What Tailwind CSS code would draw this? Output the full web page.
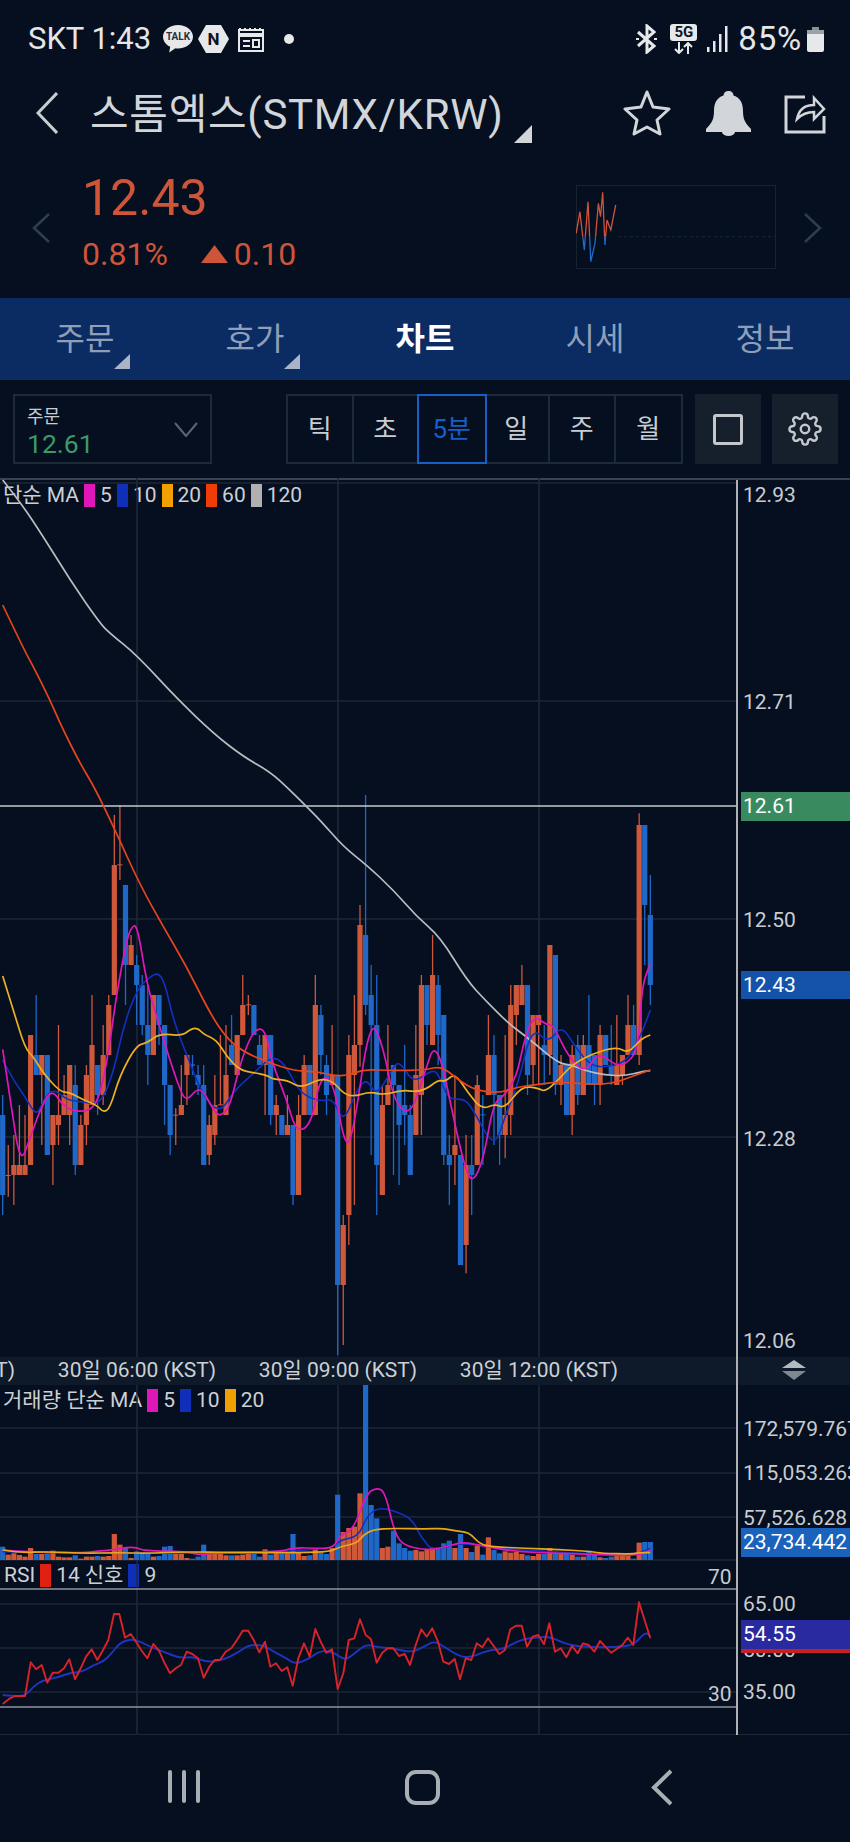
<!DOCTYPE html>
<html lang="ko">
<head>
  <meta charset="UTF-8">
  <meta name="viewport" content="width=device-width, initial-scale=1">
  <title>STMX/KRW</title>
  <script src="https://cdn.jsdelivr.net/npm/@tailwindcss/browser@4"></script>
</head>
<body class="w-[850px] h-[1842px] overflow-hidden bg-[#050f1f] text-[#ccd0d5] font-['Roboto','Noto_Sans_CJK_KR',sans-serif]">

  <!-- status bar -->
  <div class="h-[78px] flex items-center pl-[28px] pr-[26px] text-[#e4e6e8]">
    <span class="text-[31px]">SKT 1:43</span>
    <svg class="ml-[12px]" width="30" height="28" viewBox="0 0 30 28"><path d="M15 0C6.700 0 0 5.300 0 11.800c0 4.300 2.900 8 7.200 10l-1 5.700 6.200-4.200c.8.100 1.700.2 2.600.2 8.300 0 15-5.300 15-11.700S23.300 0 15 0z" fill="#e6e8ea"/><text x="15" y="15" text-anchor="middle" font-size="10" font-weight="700" fill="#26303c">TALK</text></svg>
    <svg class="ml-[5px]" width="31" height="28" viewBox="0 0 31 28"><polygon points="8,0 23,0 31,14 23,28 8,28 0,14" fill="#e6e8ea"/><text x="15.500" y="20" text-anchor="middle" font-size="17" font-weight="700" fill="#0c1522">N</text></svg>
    <svg class="ml-[9px]" width="26" height="25" viewBox="0 0 26 25" fill="none" stroke="#e6e8ea" stroke-width="2"><rect x="1" y="3" width="24" height="21"/><path d="M1 8h24" stroke-width="4"/><path d="M2 1v2M7 1v2M12 1v2M17 1v2M22 1v2M5 14h7M5 19h7M15 13h6v7h-6z"/></svg>
    <span class="ml-[20px] w-[10px] h-[10px] rounded-full bg-[#e6e8ea]"></span>
    <div class="ml-auto flex items-center">
      <svg width="21" height="30" viewBox="0 0 21 30" fill="none" stroke="#e6e8ea" stroke-width="3"><path d="M2 8l16 14-7 6V2l7 6L2 22"/><path d="M0 15h3M18 15h3" stroke-width="2"/></svg>
      <div class="ml-[13px] w-[27px] h-[30px] relative">
        <div class="w-[27px] h-[17px] rounded-[3px] bg-[#e6e8ea] text-[#0c1522] text-[15px] font-bold leading-[17px] text-center">5G</div>
        <svg class="absolute left-[3px] top-[18px]" width="21" height="12" viewBox="0 0 21 12" fill="none" stroke="#e6e8ea" stroke-width="2"><path d="M6 0v10M2 7l4 4 4-4M15 12V2M11 5l4-4 4 4"/></svg>
      </div>
      <svg class="ml-[10px]" width="22" height="26" viewBox="0 0 22 26" fill="#e6e8ea"><rect x="0" y="21" width="2.500" height="5"/><rect x="6" y="15" width="2.500" height="11"/><rect x="12" y="8" width="2.500" height="18"/><rect x="18" y="0" width="2.500" height="26"/></svg>
      <span class="ml-[9px] text-[33px] tracking-[0.8px]">85%</span>
      <svg class="ml-[5px]" width="17" height="25" viewBox="0 0 17 25"><rect x="0" y="3" width="17" height="22" rx="2" fill="#e6e8ea"/><rect x="5" y="0" width="7" height="3" fill="#8b9098"/><rect x="0" y="3" width="17" height="4" fill="#9ca1a7"/></svg>
    </div>
  </div>

  <!-- title -->
  <div class="h-[70px] flex items-center pl-[36px] pr-[24px] text-[#d2d6da]">
    <svg width="22" height="42" viewBox="0 0 22 42" fill="none" stroke="#c9cdd2" stroke-width="3"><path d="M21 1L2 21l19 20"/></svg>
    <span class="ml-[32px] mt-[3px] text-[42px] leading-none tracking-[0.7px]">스톰엑스(STMX/KRW)</span>
    <svg class="ml-[10px] self-end mb-[5px]" width="18" height="18" viewBox="0 0 18 18"><polygon points="18,0 18,18 0,18" fill="#d2d6da"/></svg>
    <svg class="ml-auto" width="48" height="46" viewBox="0 0 48 46" fill="none" stroke="#d2d6da" stroke-width="3" stroke-linejoin="round"><polygon points="24,2 30,17 46,19 34,30 37,44 24,37 11,44 14,30 2,19 18,17"/></svg>
    <svg class="ml-[34px]" width="47" height="45" viewBox="0 0 47 45" fill="#d2d6da"><path d="M23.500 0c-3 0-5 2-5 4.500C11 7 9 13 9 20c0 8-2 12-8 18v3h45v-3c-6-6-8-10-8-18 0-7-2-13-9.500-15.500C28.500 2 26.500 0 23.500 0z"/><path d="M17 41a6.500 4 0 0 0 13 0z"/></svg>
    <svg class="ml-[32px]" width="42" height="42" viewBox="0 0 42 42" fill="none" stroke="#d2d6da" stroke-width="3"><path d="M21 5H2v35h38V24"/><path d="M13 27c2-10 9-14 17-14V6l10 11-10 10v-7c-7 0-12 2-17 7z" stroke-width="2.500"/></svg>
  </div>

  <!-- price -->
  <div class="h-[150px] relative">
    <div class="absolute left-[82px] top-[21px] text-[#cf5538]">
      <div class="text-[50px] leading-[58px]">12.43</div>
      <div class="flex items-center mt-[7px] text-[32px] leading-[40px]">
        <span>0.81%</span>
        <svg class="ml-[33px]" width="27" height="18" viewBox="0 0 27 18"><polygon points="13.500,0 27,18 0,18" fill="#cf5538"/></svg>
        <span class="ml-[6px]">0.10</span>
      </div>
    </div>
    <svg class="absolute left-[32px] top-[65px]" width="18" height="30" viewBox="0 0 18 30" fill="none" stroke="#2f3d50" stroke-width="2.500"><path d="M17 1L2 15l15 14"/></svg>
    <svg class="absolute left-[576px] top-[37px]" width="200" height="84" viewBox="0 0 200 84" fill="none">
      <rect x="0.500" y="0.500" width="199" height="83" stroke="#17222f"/>
      <path d="M42 51.700H199" stroke="#1b2838" stroke-dasharray="3 3"/>
      <clipPath id="mini-up"><rect x="0" y="0" width="200" height="51.700"/></clipPath>
      <clipPath id="mini-down"><rect x="0" y="51.700" width="200" height="33"/></clipPath>
      <polyline clip-path="url(#mini-up)" stroke="#cf5538" stroke-width="1.300" points="0.200,48.300 3.900,26.700 8.300,65 12,16.700 14.800,76.700 19,58.300 22.400,18.300 24.500,31.700 26.700,7.300 28.900,60 31,35 34.800,45 39.700,20"/>
      <polyline clip-path="url(#mini-down)" stroke="#1f6bc9" stroke-width="1.300" points="0.200,48.300 3.900,26.700 8.300,65 12,16.700 14.800,76.700 19,58.300 22.400,18.300 24.500,31.700 26.700,7.300 28.900,60 31,35 34.800,45 39.700,20"/>
    </svg>
    <svg class="absolute left-[804px] top-[65px]" width="18" height="30" viewBox="0 0 18 30" fill="none" stroke="#2f3d50" stroke-width="2.500"><path d="M1 1l15 14L1 29"/></svg>
  </div>

  <!-- tabs -->
  <div class="h-[82px] bg-[#0b2b63] flex text-[32px] text-[#8f9fb8]">
    <div class="relative flex-1 flex items-center justify-center">주문
      <svg class="absolute left-[114px] top-[56px]" width="16" height="15" viewBox="0 0 16 15"><polygon points="16,0 16,15 0,15" fill="#aab4c6"/></svg>
    </div>
    <div class="relative flex-1 flex items-center justify-center">호가
      <svg class="absolute left-[114px] top-[56px]" width="16" height="15" viewBox="0 0 16 15"><polygon points="16,0 16,15 0,15" fill="#aab4c6"/></svg>
    </div>
    <div class="flex-1 flex items-center justify-center text-white font-bold">차트</div>
    <div class="flex-1 flex items-center justify-center">시세</div>
    <div class="flex-1 flex items-center justify-center">정보</div>
  </div>

  <!-- toolbar -->
  <div class="h-[98px] pt-[14px] pl-[13px] flex">
    <div class="w-[199px] h-[70px] border-2 border-[#1f2a38] pl-[12px] pr-[12px] pt-[5px] flex items-center justify-between">
      <div>
        <div class="text-[18px] leading-[24px] text-[#c8cdd2]">주문</div>
        <div class="text-[26.500px] leading-[30px] text-[#3d9a68]">12.61</div>
      </div>
      <svg class="-mt-[5px]" width="24" height="15" viewBox="0 0 24 15" fill="none" stroke="#5a6675" stroke-width="2"><path d="M1 1l11 13L23 1"/></svg>
    </div>
    <div class="ml-[74px] w-[397px] h-[70px] border-2 border-[#1f2a38] grid grid-cols-6 text-[26px] text-[#c8cdd2]">
      <div class="flex items-center justify-center border-r-2 border-[#1f2a38]">틱</div>
      <div class="flex items-center justify-center border-r-2 border-[#1f2a38]">초</div>
      <div class="flex items-center justify-center border-2 -m-[2px] border-[#1560c8] text-[#1560c8] relative">5분</div>
      <div class="flex items-center justify-center border-r-2 border-[#1f2a38]">일</div>
      <div class="flex items-center justify-center border-r-2 border-[#1f2a38]">주</div>
      <div class="flex items-center justify-center">월</div>
    </div>
    <div class="ml-[12px] w-[66px] h-[70px] bg-[#161f2c] flex items-center justify-center">
      <div class="w-[30px] h-[31px] border-[3px] border-[#c4c8cd] rounded-[3px]"></div>
    </div>
    <div class="ml-[11px] w-[66px] h-[70px] bg-[#161f2c] flex items-center justify-center">
      <svg width="34" height="34" viewBox="0 0 24 24" fill="none" stroke="#c4c8cd" stroke-width="1.700"><circle cx="12" cy="12" r="3"/><path d="M19.400 15a1.650 1.650 0 0 0 .33 1.820l.06.06a2 2 0 0 1 0 2.830 2 2 0 0 1-2.830 0l-.06-.06a1.650 1.650 0 0 0-1.820-.33 1.650 1.650 0 0 0-1 1.510V21a2 2 0 0 1-2 2 2 2 0 0 1-2-2v-.09A1.650 1.650 0 0 0 9 19.400a1.650 1.650 0 0 0-1.820.33l-.06.06a2 2 0 0 1-2.830 0 2 2 0 0 1 0-2.830l.06-.06a1.650 1.650 0 0 0 .33-1.820 1.650 1.650 0 0 0-1.510-1H3a2 2 0 0 1-2-2 2 2 0 0 1 2-2h.09A1.650 1.650 0 0 0 4.600 9a1.650 1.650 0 0 0-.33-1.820l-.06-.06a2 2 0 0 1 0-2.830 2 2 0 0 1 2.830 0l.06.06a1.650 1.650 0 0 0 1.820.33H9a1.650 1.650 0 0 0 1-1.510V3a2 2 0 0 1 2-2 2 2 0 0 1 2 2v.09a1.650 1.650 0 0 0 1 1.510 1.650 1.650 0 0 0 1.820-.33l.06-.06a2 2 0 0 1 2.830 0 2 2 0 0 1 0 2.830l-.06.06a1.650 1.650 0 0 0-.33 1.820V9a1.650 1.650 0 0 0 1.510 1H21a2 2 0 0 1 2 2 2 2 0 0 1-2 2h-.09a1.650 1.650 0 0 0-1.510 1z"/></svg>
    </div>
  </div>

  <!-- chart -->
  <div class="relative h-[1257px] border-t-2 border-[#39434f] text-[21px] leading-none">
    <!-- main pane -->
    <div class="h-[877px] pt-[3px] pl-[3px]">
      <div class="flex items-center gap-[5px] h-[24px]">
        <span>단순 MA</span><i class="w-[11px] h-[23px] bg-[#e017b8]"></i><span>5</span><i class="w-[11px] h-[23px] bg-[#0f2fb8]"></i><span>10</span><i class="w-[11px] h-[23px] bg-[#f0a000]"></i><span>20</span><i class="w-[11px] h-[23px] bg-[#f03c08]"></i><span>60</span><i class="w-[11px] h-[23px] bg-[#b0b0b0]"></i><span>120</span>
      </div>
    </div>
    <!-- time axis -->
    <div class="relative z-10 h-[28px] bg-[#0e1929] text-[21px] whitespace-nowrap">
      <span class="absolute left-[-144px] top-[3px] w-[160px] text-center">30일 03:00 (KST)</span>
      <span class="absolute left-[57px] top-[3px] w-[160px] text-center">30일 06:00 (KST)</span>
      <span class="absolute left-[258px] top-[3px] w-[160px] text-center">30일 09:00 (KST)</span>
      <span class="absolute left-[459px] top-[3px] w-[160px] text-center">30일 12:00 (KST)</span>
      <svg class="absolute left-[782px] top-[3px]" width="24" height="20" viewBox="0 0 24 20"><polygon points="12,0 24,8 0,8" fill="#b4b9bf"/><polygon points="12,20 24,11 0,11" fill="#7f8791"/></svg>
    </div>
    <!-- volume pane -->
    <div class="h-[175px] pt-[3px] pl-[3px]">
      <div class="flex items-center gap-[5px] h-[24px]">
        <span>거래량 단순 MA</span><i class="w-[11px] h-[23px] bg-[#e017b8]"></i><span>5</span><i class="w-[11px] h-[23px] bg-[#0f2fb8]"></i><span>10</span><i class="w-[11px] h-[23px] bg-[#f0a000]"></i><span>20</span>
      </div>
    </div>
    <!-- rsi pane -->
    <div class="h-[175px] pt-[3px] pl-[4px]">
      <div class="flex items-center gap-[5px] h-[24px]">
        <span>RSI</span><i class="w-[11px] h-[23px] bg-[#e02010]"></i><span>14</span><span>신호</span><i class="w-[11px] h-[23px] bg-[#0f2fb8]"></i><span>9</span>
      </div>
    </div>

    <svg id="plot" class="absolute left-0 top-[-2px]" width="850" height="1257" viewBox="0 0 850 1257"></svg>

    <!-- axis line -->
    <div class="absolute left-[736px] top-0 bottom-0 w-[2px] bg-[#aeb2b6] z-20"></div>
    <div class="absolute left-0 right-0 bottom-0 h-[1px] bg-[#1c2736]"></div>

    <!-- price axis -->
    <div class="absolute inset-0 text-[#c8ccd1] z-20 overflow-hidden whitespace-nowrap">
      <span class="absolute left-[743px] top-[5px]">12.93</span>
      <span class="absolute left-[743px] top-[212px]">12.71</span>
      <span class="absolute left-[741px] top-[312px] w-[109px] h-[29px] pl-[2px] bg-[#3a8a60] text-white leading-[29px]">12.61</span>
      <span class="absolute left-[743px] top-[430px]">12.50</span>
      <span class="absolute left-[741px] top-[491px] w-[109px] h-[28px] pl-[2px] bg-[#1553ab] text-white leading-[28px]">12.43</span>
      <span class="absolute left-[743px] top-[649px]">12.28</span>
      <span class="absolute left-[743px] top-[851px]">12.06</span>

      <span class="absolute left-[743px] top-[939px]">172,579.767</span>
      <span class="absolute left-[743px] top-[983px]">115,053.263</span>
      <span class="absolute left-[743px] top-[1028px]">57,526.628</span>
      <span class="absolute left-[741px] top-[1048px] w-[109px] h-[29px] pl-[2px] bg-[#1a62bb] text-white leading-[29px]">23,734.442</span>

      <span class="absolute left-[708px] top-[1087px]">70</span>
      <span class="absolute left-[743px] top-[1114px]">65.00</span>
      <span class="absolute left-[743px] top-[1160px]">50.00</span>
      <span class="absolute left-[741px] top-[1140px] w-[109px] h-[29px] pl-[2px] bg-[#2a2aa0] text-white leading-[29px] border-b-[4px] border-[#c82020] box-content">54.55</span>
      <span class="absolute left-[708px] top-[1204px]">30</span>
      <span class="absolute left-[743px] top-[1202px]">35.00</span>
    </div>
  </div>

  <!-- nav -->
  <div class="h-[105px] relative text-[#b4b9bf]">
    <div class="absolute left-[168px] top-[35px] w-[32px] h-[33px] flex justify-between">
      <i class="w-[4px] h-full rounded-[2px] bg-[#a9aeb5]"></i><i class="w-[4px] h-full rounded-[2px] bg-[#a9aeb5]"></i><i class="w-[4px] h-full rounded-[2px] bg-[#a9aeb5]"></i>
    </div>
    <div class="absolute left-[405px] top-[35px] w-[35px] h-[35px] border-[4px] border-[#a9aeb5] rounded-[11px]"></div>
    <svg class="absolute left-[651px] top-[34px]" width="21" height="37" viewBox="0 0 21 37" fill="none" stroke="#a9aeb5" stroke-width="4"><path d="M20 2L3 18.500 20 35"/></svg>
  </div>

  <script>
    // everything below is traced from the reference in 3x units, y measured from 780
    const px = x => x / 3;
    const py = y => (y + 780 * 3) / 3 - 478;
    const xAt = i => (8 + 16.75 * i) / 3;
    const ORANGE = "#d0583a", BLUE = "#2068c8";

    // [isBlue, wickTop, bodyTop, bodyBottom, wickBottom]
    const candles = [
      [1,945,1005,1245,1305],[0,1095,1185,1188,1250],[0,1065,1155,1185,1275],[0,975,1155,1185,1185],[0,1005,1155,1185,1185],
      [0,765,765,1155,1155],[1,645,825,885,885],[0,825,825,885,1095],[1,825,825,1125,1125],[0,1005,1005,1095,1215],
      [0,735,1005,1035,1095],[0,885,945,1005,1005],[0,855,855,1005,1095],[1,855,915,1155,1185],[0,1005,1035,1155,1155],
      [0,855,885,1035,1095],[0,645,795,975,975],[1,855,855,945,1005],[0,735,825,945,975],[0,645,675,825,825],
      [0,105,255,645,645],[0,75,253,256,300],[1,315,315,555,675],[0,465,495,555,555],[1,525,555,615,735],
      [1,585,615,735,765],[1,615,735,825,915],[0,645,645,825,825],[1,645,645,735,795],[1,735,735,915,1035],
      [1,915,915,1065,1125],[0,985,1004,1007,1095],[0,855,975,1005,1005],[0,825,825,885,975],[1,825,853,857,885],
      [1,855,885,915,945],[1,855,915,1155,1155],[0,1005,1035,1125,1155],[0,885,975,1065,1095],[0,765,973,976,976],
      [0,735,885,1005,1005],[1,705,795,855,855],[0,765,765,885,885],[0,585,675,765,765],[0,645,673,676,705],
      [1,675,675,765,765],[1,765,795,855,855],[0,765,765,855,1005],[1,765,765,1005,1035],[0,945,975,1005,1065],
      [1,1005,1005,1065,1065],[0,945,1035,1065,1065],[1,1035,1035,1245,1275],[0,945,1005,1245,1245],[0,825,855,1005,1005],
      [1,855,855,1005,1005],[0,585,675,1005,1005],[1,675,705,825,885],[1,825,855,945,1005],[0,735,885,915,915],
      [1,885,885,1515,1725],[0,1305,1335,1515,1695],[0,765,825,1305,1395],[0,645,795,885,1275],[0,375,435,795,860],
      [1,45,465,675,705],[1,555,645,735,1125],[1,585,735,1155,1305],[0,915,975,1245,1245],[0,735,915,975,975],
      [1,855,855,915,1185],[1,915,915,1035,1215],[1,795,975,1005,1095],[1,975,1005,1185,1185],[0,735,885,1065,1065],
      [0,585,615,945,1065],[1,615,615,735,795],[0,465,585,795,795],[1,585,615,765,855],[1,705,705,1125,1155],
      [1,1065,1125,1155,1275],[0,885,1095,1125,1215],[1,1125,1125,1455,1455],[0,1065,1155,1395,1480],[1,1065,1155,1185,1305],
      [0,885,915,1155,1155],[1,945,1003,1006,1155],[0,705,825,945,945],[1,765,825,945,1095],[1,945,945,1065,1155],
      [0,765,1005,1065,1135],[0,615,675,1005,1065],[0,615,615,705,795],[0,555,615,675,675],[1,615,615,885,945],
      [0,705,705,855,915],[0,705,705,735,915],[1,735,795,825,915],[0,495,495,825,885],[1,525,525,915,945],
      [0,825,855,915,975],[1,855,855,1005,1005],[0,795,825,1005,1065],[1,765,795,945,975],[0,765,795,945,945],
      [1,645,795,915,915],[1,825,825,915,975],[0,735,765,915,975],[1,765,765,855,855],[1,735,855,885,915],
      [0,705,855,915,915],[0,825,825,885,915],[0,645,735,825,825],[1,675,735,825,825],[0,100,135,825,855],
      [1,135,135,375,555],[1,285,405,615,675]
    ];

    // volume bar heights, negative means blue
    const volumes = [
      -40,16,20,15,10,36,-18,18,-20,28,10,8,8,-14,4,10,10,-12,10,12,
      78,46,-36,6,-26,-20,-20,10,-12,-40,-42,22,26,6,-4,-10,-46,22,22,18,
      14,-14,14,16,18,-18,-10,32,-16,20,-20,20,-78,22,12,-14,36,-22,-18,36,
      -196,84,96,100,200,-525,-165,-125,36,40,-88,-50,-36,-28,30,26,
      30,36,-36,-50,-58,36,-78,36,-24,42,-16,68,-30,-20,26,22,24,18,-14,12,
      18,-18,36,-26,18,-20,16,-10,10,-28,-18,8,-6,-10,12,12,12,-4,52,-54,-54
    ];

    const lines = [
      { color: "#b9bdc1", w: 1.7, smooth: true, pts: [8,-900,60,-835,130,-730,210,-600,300,-470,330,-440,410,-375,530,-245,640,-140,730,-70,810,-25,870,30,920,80,960,120,1030,200,1100,255,1180,330,1250,410,1320,470,1400,600,1455,660,1525,730,1585,775,1675,850,1715,855,1755,872,1815,885,1875,888,1925,875,1951,872] },
      { color: "#1430c0", w: 1.6, smooth: true, pts: [8,840,40,900,75,950,110,1010,130,960,160,925,200,960,240,965,300,975,340,880,370,740,410,630,450,590,475,578,495,610,520,720,560,825,610,950,660,1000,700,935,760,880,820,825,860,860,900,940,960,965,1000,955,1030,1030,1070,930,1100,895,1130,950,1180,860,1200,845,1240,910,1295,870,1315,880,1345,960,1395,955,1425,1000,1465,1075,1490,1085,1515,1010,1555,910,1595,740,1645,790,1685,735,1725,800,1775,860,1835,860,1885,840,1925,760,1951,690] },
      { color: "#e017b8", w: 1.7, smooth: true, pts: [8,808,30,950,60,1155,90,1075,120,990,155,925,190,980,240,998,290,980,320,855,350,640,380,480,395,440,412,435,440,610,470,710,500,810,540,930,560,965,600,915,640,990,660,1010,690,980,720,850,760,750,795,745,815,845,860,960,890,1060,935,1030,960,890,1000,900,1035,1105,1060,1060,1110,710,1150,800,1180,960,1230,1010,1270,890,1310,770,1370,1060,1400,1180,1420,1205,1450,1140,1480,970,1510,950,1550,890,1570,790,1600,705,1640,735,1660,735,1705,830,1755,880,1795,815,1845,855,1875,855,1915,810,1925,620,1951,550] },
      { color: "#eeb020", w: 1.7, smooth: true, pts: [8,588,40,690,75,805,100,830,130,880,180,935,210,938,250,960,290,975,310,997,330,985,360,885,410,795,440,790,480,760,545,768,575,745,595,745,610,762,650,780,680,830,720,870,760,878,800,885,820,898,860,900,905,925,960,895,1000,905,1030,940,1060,950,1110,935,1150,945,1210,930,1240,935,1275,930,1315,900,1335,905,1365,880,1405,940,1445,988,1485,972,1515,985,1565,918,1615,925,1635,935,1675,900,1715,855,1775,822,1850,800,1885,820,1925,775,1951,765] },
      { color: "#e8451e", w: 1.7, smooth: true, pts: [8,-525,75,-385,100,-340,150,-240,185,-160,240,-50,285,25,345,150,420,315,490,440,560,560,630,700,680,775,730,815,800,845,880,872,950,875,1030,892,1090,868,1180,872,1275,870,1325,858,1375,900,1425,930,1495,940,1555,920,1625,912,1675,905,1755,912,1835,912,1895,890,1951,870] },
      // volume averages
      { color: "#1430c0", w: 1.6, smooth: true, pts: [8,2315,300,2320,600,2320,990,2310,1020,2280,1075,2270,1100,2210,1130,2185,1170,2188,1235,2215,1260,2265,1275,2285,1290,2305,1325,2305,1375,2290,1435,2295,1555,2310,1775,2322,1895,2328,1935,2312,1951,2305] },
      { color: "#e017b8", w: 1.7, smooth: true, pts: [8,2310,200,2322,340,2310,380,2302,410,2302,430,2312,560,2315,600,2325,650,2318,840,2315,880,2303,950,2305,1000,2305,1020,2265,1060,2250,1100,2140,1130,2123,1155,2135,1180,2245,1205,2295,1275,2310,1325,2305,1385,2285,1435,2295,1545,2315,1675,2320,1915,2328,1951,2310] },
      { color: "#e8a818", w: 1.7, smooth: true, pts: [8,2310,50,2318,150,2315,250,2320,350,2318,450,2320,550,2315,700,2318,900,2318,990,2315,1020,2300,1070,2290,1090,2265,1120,2248,1180,2245,1275,2247,1330,2245,1365,2253,1395,2255,1415,2265,1440,2292,1475,2300,1575,2305,1675,2308,1775,2315,1805,2320,1895,2322,1915,2318,1951,2318] },
      // rsi
      { color: "#1f35c0", w: 1.9, smooth: true, pts: [8,2745,40,2748,75,2748,100,2720,125,2702,175,2692,210,2678,250,2675,280,2655,310,2645,335,2620,360,2588,400,2575,450,2600,490,2615,540,2635,580,2630,620,2647,670,2640,710,2620,745,2595,790,2595,830,2620,860,2635,885,2653,930,2635,960,2612,1000,2615,1035,2643,1070,2615,1100,2592,1130,2602,1180,2605,1235,2618,1275,2598,1305,2583,1335,2602,1380,2630,1415,2632,1465,2610,1510,2608,1565,2577,1615,2572,1650,2570,1705,2595,1775,2602,1845,2602,1900,2595,1925,2568,1940,2558,1951,2570] },
      { color: "#d8232a", w: 1.9, pts: [8,2772,30,2755,45,2748,75,2748,92,2647,108,2668,125,2655,142,2708,158,2678,175,2678,192,2665,208,2638,225,2698,242,2665,258,2630,275,2608,292,2640,308,2612,325,2580,342,2502,358,2502,375,2573,392,2562,408,2585,425,2612,442,2635,460,2592,477,2612,494,2650,510,2680,527,2665,543,2655,560,2615,577,2622,594,2635,611,2693,628,2660,644,2640,660,2640,677,2615,694,2605,711,2580,728,2552,745,2552,761,2580,778,2617,795,2585,811,2660,828,2650,845,2673,862,2662,878,2717,895,2635,912,2590,929,2630,946,2547,962,2585,979,2618,996,2608,1013,2727,1030,2680,1046,2580,1063,2575,1080,2518,1097,2565,1113,2578,1130,2648,1147,2618,1163,2605,1180,2605,1197,2628,1214,2622,1230,2655,1247,2595,1264,2548,1280,2570,1297,2545,1314,2585,1330,2645,1347,2652,1364,2637,1380,2698,1397,2635,1414,2640,1430,2590,1447,2602,1464,2575,1481,2598,1498,2622,1515,2610,1531,2548,1548,2537,1565,2537,1581,2600,1598,2570,1615,2565,1632,2593,1648,2530,1665,2615,1682,2605,1699,2632,1716,2598,1733,2620,1749,2590,1766,2595,1783,2615,1800,2583,1816,2600,1833,2618,1850,2607,1867,2595,1883,2573,1900,2595,1917,2467,1951,2575] }
    ];

    const plot = document.getElementById("plot");
    function add(tag, attrs) {
      const el = document.createElementNS("http://www.w3.org/2000/svg", tag);
      for (const k in attrs) el.setAttribute(k, attrs[k]);
      plot.appendChild(el);
    }
    function hline(y, color, w, x2) {
      add("line", { x1: 0, x2: x2 || 737, y1: y - 478, y2: y - 478, stroke: color, "stroke-width": w || 1.3 });
    }

    // grid
    [483, 701, 919, 1137, 1428, 1473, 1517, 1560, 1604, 1648, 1692].forEach(y => hline(y, "#1c2736"));
    [137, 338, 539].forEach(x => add("line", { x1: x, x2: x, y1: 0, y2: 1257, stroke: "#1f2a3a", "stroke-width": 1.5 }));

    // volume bars
    volumes.forEach((v, i) => {
      const h = Math.abs(v);
      add("rect", { x: xAt(i) - 2.6, y: py(2340 - h), width: 5.2, height: px(h), fill: v < 0 ? BLUE : ORANGE });
    });

    // candles
    candles.forEach((c, i) => {
      const color = c[0] ? BLUE : ORANGE, x = xAt(i);
      add("line", { x1: x, x2: x, y1: py(c[1]), y2: py(c[4]), stroke: color, "stroke-width": 1.3 });
      add("rect", { x: x - 2.6, y: py(c[2]), width: 5.2, height: px(c[3] - c[2]), fill: color });
    });

    hline(806, "#c6cacf", 1.6);
    hline(1589, "#8f949a", 1.5);
    hline(1707, "#8f949a", 1.5);

    // moving averages, rounded through the midpoints except the raw rsi line
    lines.forEach(l => {
      const p = [];
      for (let i = 0; i < l.pts.length; i += 2) p.push([px(l.pts[i]), py(l.pts[i + 1])]);
      let d = "M" + p[0][0].toFixed(1) + " " + p[0][1].toFixed(1);
      for (let i = 1; i < p.length; i++) {
        if (l.smooth && i < p.length - 1) {
          const mx = (p[i][0] + p[i + 1][0]) / 2, my = (p[i][1] + p[i + 1][1]) / 2;
          d += "Q" + p[i][0].toFixed(1) + " " + p[i][1].toFixed(1) + " " + mx.toFixed(1) + " " + my.toFixed(1);
        } else {
          d += "L" + p[i][0].toFixed(1) + " " + p[i][1].toFixed(1);
        }
      }
      add("path", { d: d, fill: "none", stroke: l.color, "stroke-width": l.w, "stroke-linejoin": "round" });
    });
  </script>
</body>
</html>
